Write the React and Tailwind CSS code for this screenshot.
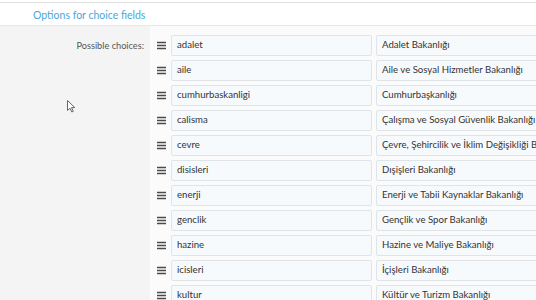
import React from "react";

const choices = [
  ["adalet", "Adalet Bakanlığı"],
  ["aile", "Aile ve Sosyal Hizmetler Bakanlığı"],
  ["cumhurbaskanligi", "Cumhurbaşkanlığı"],
  ["calisma", "Çalışma ve Sosyal Güvenlik Bakanlığı"],
  ["cevre", "Çevre, Şehircilik ve İklim Değişikliği Bakanlığı"],
  ["disisleri", "Dışişleri Bakanlığı"],
  ["enerji", "Enerji ve Tabii Kaynaklar Bakanlığı"],
  ["genclik", "Gençlik ve Spor Bakanlığı"],
  ["hazine", "Hazine ve Maliye Bakanlığı"],
  ["icisleri", "İçişleri Bakanlığı"],
  ["kultur", "Kültür ve Turizm Bakanlığı"],
];

function Handle() {
  return (
    <svg width="11" height="9" viewBox="0 0 11 9" className="shrink-0">
      <path d="M1 1.5h9M1 4.5h9M1 7.5h9" stroke="#4a4a4a" strokeWidth="1.3" />
    </svg>
  );
}

export default function App() {
  return (
    <div className="relative w-[536px] h-[300px] overflow-hidden bg-white font-['Lato','Noto_Sans',sans-serif]">
      <div className="h-[3px] border-b border-[#e2e2e2] bg-white" />
      <div className="h-[23px] flex items-center pl-[33px] pt-[3px] border-b border-[#e8e8e8] text-[10.5px] text-[#4ba6d9]">
        Options for choice fields
      </div>
      <div className="flex h-full">
        <div className="w-[150px] shrink-0 bg-[#f4f4f4] pt-[9px]">
          <div className="h-[21px] flex items-center justify-end pr-[6px] text-[9.2px] text-[#555]">
            Possible choices:
          </div>
        </div>
        <div className="flex-1 bg-[#fbfbfb] pt-[9px] flex flex-col gap-[4px]">
          {choices.map(([key, label]) => (
            <div key={key} className="flex items-center h-[21px]">
              <div className="w-[21px] flex justify-center pl-[1px]">
                <Handle />
              </div>
              <div className="w-[201px] h-[21px] shrink-0 flex items-center px-[5px] bg-[#f7fafd] border border-[#dfe4e9] rounded-[2px] text-[9.6px] text-[#333]">
                {key}
              </div>
              <div className="w-[240px] h-[21px] shrink-0 ml-[4px] flex items-center px-[5px] bg-[#f7fafd] border border-[#dfe4e9] rounded-[2px] text-[9.6px] text-[#333] whitespace-nowrap">
                {label}
              </div>
            </div>
          ))}
        </div>
      </div>
      <svg className="absolute left-[67px] top-[100px]" width="9" height="13" viewBox="0 0 9 13">
        <path d="M0.5 0.5v10l2.5-2.3 1.8 3.8 1.5-0.7-1.8-3.7h3.3z" fill="#fff" stroke="#666" strokeWidth="1" />
      </svg>
    </div>
  );
}
